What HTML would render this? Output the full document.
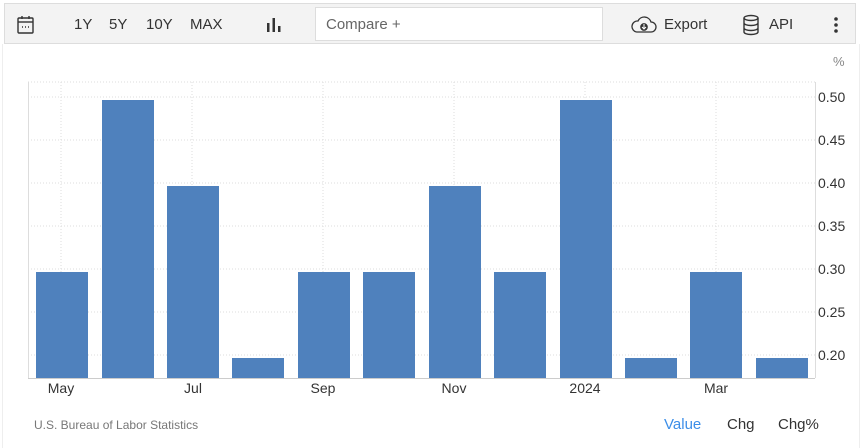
<!DOCTYPE html>
<html><head><style>
body{margin:0;width:860px;height:448px;background:#fff;font-family:"Liberation Sans",sans-serif;position:relative;overflow:hidden}
.tb{position:absolute;left:4px;top:3px;width:852px;height:41px;background:#f3f3f3;border:1px solid #ddd;box-sizing:border-box}
.t{position:absolute;font-size:15px;color:#333;top:16px}
.page{position:absolute;left:2px;top:44px;width:856px;height:404px;border-left:1px solid #eee;border-right:1px solid #eee}
.bar{position:absolute;background:#4f81bd;width:52px}
.yl{position:absolute;left:818px;font-size:14px;color:#333}
.xl{position:absolute;top:380px;font-size:14px;color:#333;transform:translateX(-50%)}
</style></head><body>
<div class="tb"></div>
<svg style="position:absolute;left:16px;top:15px" width="20" height="20" viewBox="0 0 20 20" fill="none" stroke="#333" stroke-width="1.4"><rect x="2" y="3" width="15" height="15" rx="1"/><line x1="2" y1="7" x2="17" y2="7"/><line x1="6" y1="1" x2="6" y2="4"/><line x1="13" y1="1" x2="13" y2="4"/><line x1="6" y1="12" x2="7" y2="12"/><line x1="9" y1="12" x2="10" y2="12"/><line x1="12" y1="12" x2="13" y2="12"/></svg>
<div class="t" style="left:74px">1Y</div><div class="t" style="left:109px">5Y</div><div class="t" style="left:146px">10Y</div><div class="t" style="left:190px">MAX</div>
<svg style="position:absolute;left:266px;top:17px" width="16" height="16"><rect x="1" y="6" width="2.5" height="9" fill="#333"/><rect x="6.5" y="1" width="2.5" height="14" fill="#333"/><rect x="12" y="9" width="2.5" height="6" fill="#333"/></svg>
<div style="position:absolute;left:315px;top:7px;width:288px;height:34px;background:#fff;border:1px solid #ddd;box-sizing:border-box"></div>
<div class="t" style="left:326px;color:#666">Compare +</div>
<svg style="position:absolute;left:631px;top:16px" width="26" height="18" viewBox="0 0 26 18" fill="none" stroke="#333" stroke-width="1.3"><path d="M6 16 H20 A5 5 0 0 0 20 6 A7 7 0 0 0 7 5 A5.5 5.5 0 0 0 6 16Z"/><circle cx="13" cy="11" r="3.2" fill="#333"/><path d="M13 8v5M11 11l2 2 2-2" stroke="#fff" stroke-width="1"/></svg>
<div class="t" style="left:664px">Export</div>
<svg style="position:absolute;left:742px;top:14px" width="18" height="22" viewBox="0 0 18 22" fill="none" stroke="#333" stroke-width="1.4"><ellipse cx="9" cy="4" rx="7" ry="2.5"/><path d="M2 4v14c0 1.4 3 2.5 7 2.5s7-1.1 7-2.5V4M2 9c0 1.4 3 2.5 7 2.5s7-1.1 7-2.5M2 14c0 1.4 3 2.5 7 2.5s7-1.1 7-2.5"/></svg>
<div class="t" style="left:769px">API</div>
<svg style="position:absolute;left:833px;top:16px" width="6" height="18"><circle cx="3" cy="3" r="1.8" fill="#333"/><circle cx="3" cy="9" r="1.8" fill="#333"/><circle cx="3" cy="15" r="1.8" fill="#333"/></svg>
<div class="page"></div>
<svg style="position:absolute;left:0;top:0" width="860" height="448">
<g stroke="#ddd" stroke-dasharray="1,2" stroke-width="1">
<line x1="28" y1="82" x2="815" y2="82"/><line x1="28" y1="97" x2="815" y2="97"/><line x1="28" y1="140" x2="815" y2="140"/><line x1="28" y1="183" x2="815" y2="183"/><line x1="28" y1="226" x2="815" y2="226"/><line x1="28" y1="269" x2="815" y2="269"/><line x1="28" y1="312" x2="815" y2="312"/><line x1="28" y1="355" x2="815" y2="355"/>
<line x1="61" y1="82" x2="61" y2="378"/><line x1="192" y1="82" x2="192" y2="378"/><line x1="323" y1="82" x2="323" y2="378"/><line x1="454" y1="82" x2="454" y2="378"/><line x1="585" y1="82" x2="585" y2="378"/><line x1="716" y1="82" x2="716" y2="378"/>
</g>
<line x1="28.5" y1="82" x2="28.5" y2="378" stroke="#ddd"/>
<line x1="815.5" y1="82" x2="815.5" y2="378" stroke="#ddd"/>
<line x1="28" y1="378.5" x2="815" y2="378.5" stroke="#ccc"/>
</svg>
<div class="bar" style="left:36px;top:272px;height:106px"></div>
<div class="bar" style="left:102px;top:100px;height:278px"></div>
<div class="bar" style="left:167px;top:186px;height:192px"></div>
<div class="bar" style="left:232px;top:358px;height:20px"></div>
<div class="bar" style="left:298px;top:272px;height:106px"></div>
<div class="bar" style="left:363px;top:272px;height:106px"></div>
<div class="bar" style="left:429px;top:186px;height:192px"></div>
<div class="bar" style="left:494px;top:272px;height:106px"></div>
<div class="bar" style="left:560px;top:100px;height:278px"></div>
<div class="bar" style="left:625px;top:358px;height:20px"></div>
<div class="bar" style="left:690px;top:272px;height:106px"></div>
<div class="bar" style="left:756px;top:358px;height:20px"></div>
<div style="position:absolute;left:833px;top:54px;font-size:13px;color:#888">%</div>
<div class="yl" style="top:89px">0.50</div><div class="yl" style="top:132px">0.45</div><div class="yl" style="top:175px">0.40</div><div class="yl" style="top:218px">0.35</div><div class="yl" style="top:261px">0.30</div><div class="yl" style="top:304px">0.25</div><div class="yl" style="top:347px">0.20</div>
<div class="xl" style="left:61px">May</div><div class="xl" style="left:193px">Jul</div><div class="xl" style="left:323px">Sep</div><div class="xl" style="left:454px">Nov</div><div class="xl" style="left:585px">2024</div><div class="xl" style="left:716px">Mar</div>
<div style="position:absolute;left:34px;top:418px;font-size:12px;color:#777">U.S. Bureau of Labor Statistics</div>
<div style="position:absolute;left:664px;top:416px;font-size:15px;color:#3c8ee8">Value</div>
<div style="position:absolute;left:727px;top:416px;font-size:15px;color:#333">Chg</div>
<div style="position:absolute;left:778px;top:416px;font-size:15px;color:#333">Chg%</div>
</body></html>
